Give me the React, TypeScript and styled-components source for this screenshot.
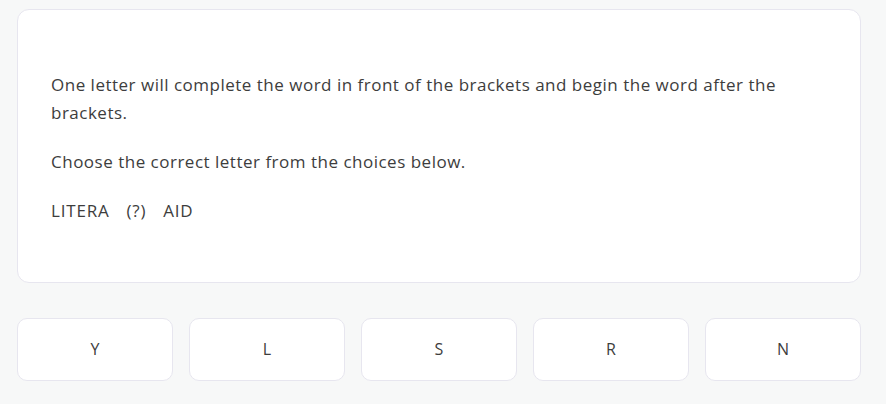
import React, { ReactElement } from 'react';
import styled, { createGlobalStyle } from 'styled-components';

const CHOICES = ['Y', 'L', 'S', 'R', 'N'];

const GlobalStyle = createGlobalStyle`
  body {
    margin: 0;
    background-color: #f7f8f8;
    font-family: 'Open Sans', Lato, sans-serif;
  }
  * {
    box-sizing: border-box;
  }
`;

function App(): ReactElement {
  return (
    <>
      <GlobalStyle />
      <Page>
        <QuestionCard>
          <Paragraph>
            One letter will complete the word in front of the brackets and begin
            the word after the brackets.
          </Paragraph>
          <Paragraph>Choose the correct letter from the choices below.</Paragraph>
          <Puzzle>
            <span>LITERA</span>
            <span>(?)</span>
            <span>AID</span>
          </Puzzle>
        </QuestionCard>
        <ChoiceRow>
          {CHOICES.map((letter) => (
            <ChoiceButton key={letter} type="button">
              {letter}
            </ChoiceButton>
          ))}
        </ChoiceRow>
      </Page>
    </>
  );
}

const Page = styled.div`
  padding: 9px 25px 0 17px;
`;

const QuestionCard = styled.div`
  height: 274px;
  padding: 61px 60px 0 33px;
  background-color: #ffffff;
  border: 1px solid #e7e6ef;
  border-radius: 12px;
`;

const Paragraph = styled.p`
  margin: 0 0 21px;
  font-size: 17px;
  line-height: 28px;
  letter-spacing: 0.5px;
  color: #3d3d3d;
`;

const Puzzle = styled(Paragraph)`
  display: flex;
  gap: 17px;
  letter-spacing: 0.8px;
`;

const ChoiceRow = styled.div`
  margin-top: 35px;
  display: grid;
  grid-template-columns: repeat(5, 1fr);
  gap: 16px;
`;

const ChoiceButton = styled.button`
  height: 63px;
  padding: 0 0 2px;
  background-color: #ffffff;
  border: 1px solid #e7e6ef;
  border-radius: 10px;
  font-family: 'Open Sans', Lato, sans-serif;
  font-size: 16px;
  color: #3d3d3d;
  cursor: pointer;
`;

export default App;
